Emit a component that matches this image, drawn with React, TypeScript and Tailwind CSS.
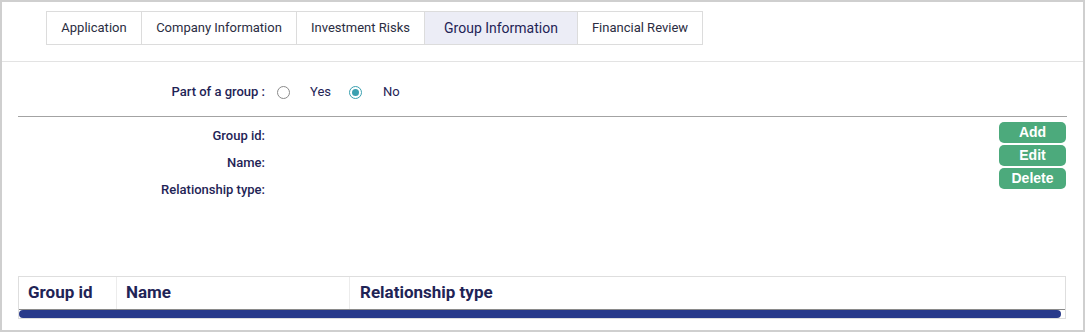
import { useState } from 'react'

const tabs = [
  { label: 'Application', width: 'w-[96px]' },
  { label: 'Company Information', width: 'w-[155px]' },
  { label: 'Investment Risks', width: 'w-[128px]' },
  { label: 'Group Information', width: 'w-[153px]' },
  { label: 'Financial Review', width: 'w-[125px]' },
]

export default function App() {
  const [active, setActive] = useState('Group Information')
  const [inGroup, setInGroup] = useState(false)

  return (
    <div className="w-[1085px] h-[332px] bg-white border-2 border-[#cfcfcf] font-['Roboto',sans-serif] text-[#1f2456]">
      {/* Tabs */}
      <div className="h-[60px] border-b border-[#e3e3e3] pt-[9px] pl-[44px]">
        <div className="flex h-[34px]">
          {tabs.map((tab, i) => (
            <button
              key={tab.label}
              onClick={() => setActive(tab.label)}
              className={`${tab.width} h-[34px] border-y border-r border-[#dcdcdc] ${i === 0 ? 'border-l' : ''} ${
                active === tab.label
                  ? 'bg-[#ecedf6] text-[14px] text-[#1f2456]'
                  : 'bg-white text-[13px] text-[#2b2d42]'
              }`}
            >
              {tab.label}
            </button>
          ))}
        </div>
      </div>

      <div className="px-4">
        {/* Part of a group */}
        <div className="flex items-center h-[18px] mt-[21px] mb-[15px] text-[13px]">
          <div className="w-[247px] text-right font-medium">Part of a group :</div>
          <label className="flex items-center ml-[12px] cursor-pointer" onClick={() => setInGroup(true)}>
            <span className="w-[13px] h-[13px] rounded-full border border-[#8a8a8a] flex items-center justify-center">
              {inGroup && <span className="w-[7px] h-[7px] rounded-full bg-[#3aa0b0]" />}
            </span>
            <span className="ml-[20px]">Yes</span>
          </label>
          <label className="flex items-center ml-[18px] cursor-pointer" onClick={() => setInGroup(false)}>
            <span
              className={`w-[13px] h-[13px] rounded-full border flex items-center justify-center ${
                !inGroup ? 'border-[#3aa0b0]' : 'border-[#8a8a8a]'
              }`}
            >
              {!inGroup && <span className="w-[7px] h-[7px] rounded-full bg-[#3aa0b0]" />}
            </span>
            <span className="ml-[21px]">No</span>
          </label>
        </div>

        <div className="border-t border-[#a3a3a3]" />

        {/* Group details */}
        <div className="flex justify-between mt-[5px] h-[154px]">
          <div className="w-[247px] text-right text-[13px] font-medium">
            <div className="h-[27px] leading-[27px]">Group id:</div>
            <div className="h-[27px] leading-[27px]">Name:</div>
            <div className="h-[27px] leading-[27px]">Relationship type:</div>
          </div>
          <div className="flex flex-col gap-[2px] w-[67px] mr-[1px]">
            {['Add', 'Edit', 'Delete'].map((b) => (
              <button
                key={b}
                className="h-[21px] rounded-[5px] bg-[#4caa7c] text-white text-[14px] font-bold font-['Liberation_Sans',sans-serif]"
              >
                {b}
              </button>
            ))}
          </div>
        </div>

        {/* Table */}
        <div className="border border-[#dedede] mr-[1px]">
          <div className="flex h-[32px] items-center text-[17px] font-bold">
            <div className="w-[98px] h-full flex items-center pl-[9px] border-r border-[#ececec]">Group id</div>
            <div className="w-[233px] h-full flex items-center pl-[9px] border-r border-[#ececec]">Name</div>
            <div className="flex-1 h-full flex items-center pl-[10px]">Relationship type</div>
          </div>
          <div className="border-t border-[#8a8a8a] h-[9px] flex items-center pr-[4px]">
            <div className="h-[8px] flex-1 rounded-full bg-[#283a8a]" />
          </div>
        </div>
      </div>
    </div>
  )
}
